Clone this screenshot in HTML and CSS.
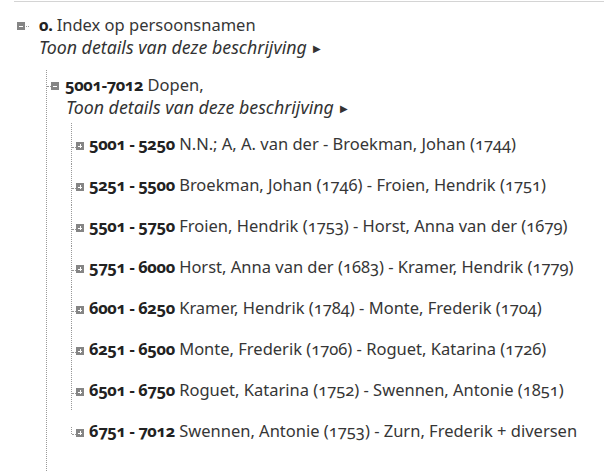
FILE: index.html
```html
<!DOCTYPE html>
<html lang="nl">
<head>
  <meta charset="UTF-8">
  <title>Index op persoonsnamen</title>
  <link rel="stylesheet" href="styles.css">
</head>
<body>
  <div class="rule"></div>

  <ul class="tree root">
    <li class="node open">
      <span class="toggle minus"></span>
      <div class="content">
        <div class="title"><b>0.</b> Index op persoonsnamen</div>
        <a class="details" href="#">Toon details van deze beschrijving <span class="arrow">&#9654;</span></a>

        <ul class="tree level1">
          <li class="node open">
            <span class="toggle minus"></span>
            <div class="content">
              <div class="title"><b>5001-7012</b> Dopen,</div>
              <a class="details" href="#">Toon details van deze beschrijving <span class="arrow">&#9654;</span></a>

              <ul class="tree level2">
                <li class="node"><span class="toggle plus"></span><div class="title"><b>5001 - 5250</b> N.N.; A, A. van der - Broekman, Johan (1744)</div></li>
                <li class="node"><span class="toggle plus"></span><div class="title"><b>5251 - 5500</b> Broekman, Johan (1746) - Froien, Hendrik (1751)</div></li>
                <li class="node"><span class="toggle plus"></span><div class="title"><b>5501 - 5750</b> Froien, Hendrik (1753) - Horst, Anna van der (1679)</div></li>
                <li class="node"><span class="toggle plus"></span><div class="title"><b>5751 - 6000</b> Horst, Anna van der (1683) - Kramer, Hendrik (1779)</div></li>
                <li class="node"><span class="toggle plus"></span><div class="title"><b>6001 - 6250</b> Kramer, Hendrik (1784) - Monte, Frederik (1704)</div></li>
                <li class="node"><span class="toggle plus"></span><div class="title"><b>6251 - 6500</b> Monte, Frederik (1706) - Roguet, Katarina (1726)</div></li>
                <li class="node"><span class="toggle plus"></span><div class="title"><b>6501 - 6750</b> Roguet, Katarina (1752) - Swennen, Antonie (1851)</div></li>
                <li class="node last"><span class="toggle plus"></span><div class="title"><b>6751 - 7012</b> Swennen, Antonie (1753) - Zurn, Frederik + diversen</div></li>
              </ul>
            </div>
          </li>
        </ul>
      </div>
    </li>
  </ul>
</body>
</html>
```

FILE: styles.css
```css
body {
  margin: 0;
  padding-top: 1px;
  font-family: "Noto Sans", "Open Sans", sans-serif;
  font-size: 16.5px;
  line-height: 22px;
  color: #363636;
  background: #fff;
  font-variant-numeric: oldstyle-nums;
  overflow: hidden;
}
.rule {
  margin-left: 14px;
  border-top: 1px solid #d4d4d4;
}

.tree {
  list-style: none;
  margin: 0;
  padding: 0;
}
.node {
  position: relative;
  display: flex;
  align-items: flex-start;
}
.title {
  white-space: nowrap;
}
.title b {
  font-weight: bold;
  color: #222;
  letter-spacing: -0.45px;
}
.details {
  display: block;
  font-style: italic;
  font-size: 17.8px;
  color: #333;
  text-decoration: none;
  white-space: nowrap;
}
.arrow {
  font-style: normal;
  font-size: 10px;
  margin-left: 1px;
  vertical-align: 2px;
}

/* toggle boxes */
.toggle {
  position: relative;
  flex: none;
  width: 8px;
  height: 8px;
  background: #858585;
}
.toggle::before {
  content: "";
  position: absolute;
  left: 2px;
  top: 4px;
  width: 4px;
  height: 1px;
  background: #fff;
}
.toggle.plus::after {
  content: "";
  position: absolute;
  left: 4px;
  top: 2px;
  width: 1px;
  height: 4px;
  background: #fff;
}

/* level 0 */
.root {
  margin-top: 12px;
}
.root > .node > .toggle {
  margin: 8px 14px 0 17px;
}
.root > .node > .toggle + .content::before {
  content: "";
  position: absolute;
  left: 26px;
  top: 12px;
  width: 3px;
  border-top: 1px dotted #999;
}

/* level 1 */
.level1 {
  margin: 11px 0 0 7px;
}
.level1 > .node {
  border-left: 1px dotted #999;
  padding-top: 4px;
  padding-bottom: 20px;
}
.level1 > .node > .toggle {
  margin: 8px 6px 0 4px;
}
.level1 > .node::before {
  content: "";
  position: absolute;
  left: 0;
  top: 16px;
  width: 4px;
  border-top: 1px dotted #999;
}
.level1 > .node > .content > .details {
  margin-left: 1px;
}

/* level 2 */
.level2 {
  margin: 4px 0 0 6px;
}
.level2 > .node {
  height: 41px;
  align-items: center;
  border-left: 1px dotted #999;
}
.level2 > .node > .toggle {
  margin: 4px 5px 0 4px;
}
.level2 > .node::before {
  content: "";
  position: absolute;
  left: 0;
  top: 24px;
  width: 4px;
  border-top: 1px dotted #999;
}
.level2 > .node.last {
  border-left-color: transparent;
}
.level2 > .node.last::after {
  content: "";
  position: absolute;
  left: -1px;
  top: 17px;
  height: 7px;
  border-left: 1px dotted #999;
}
```
